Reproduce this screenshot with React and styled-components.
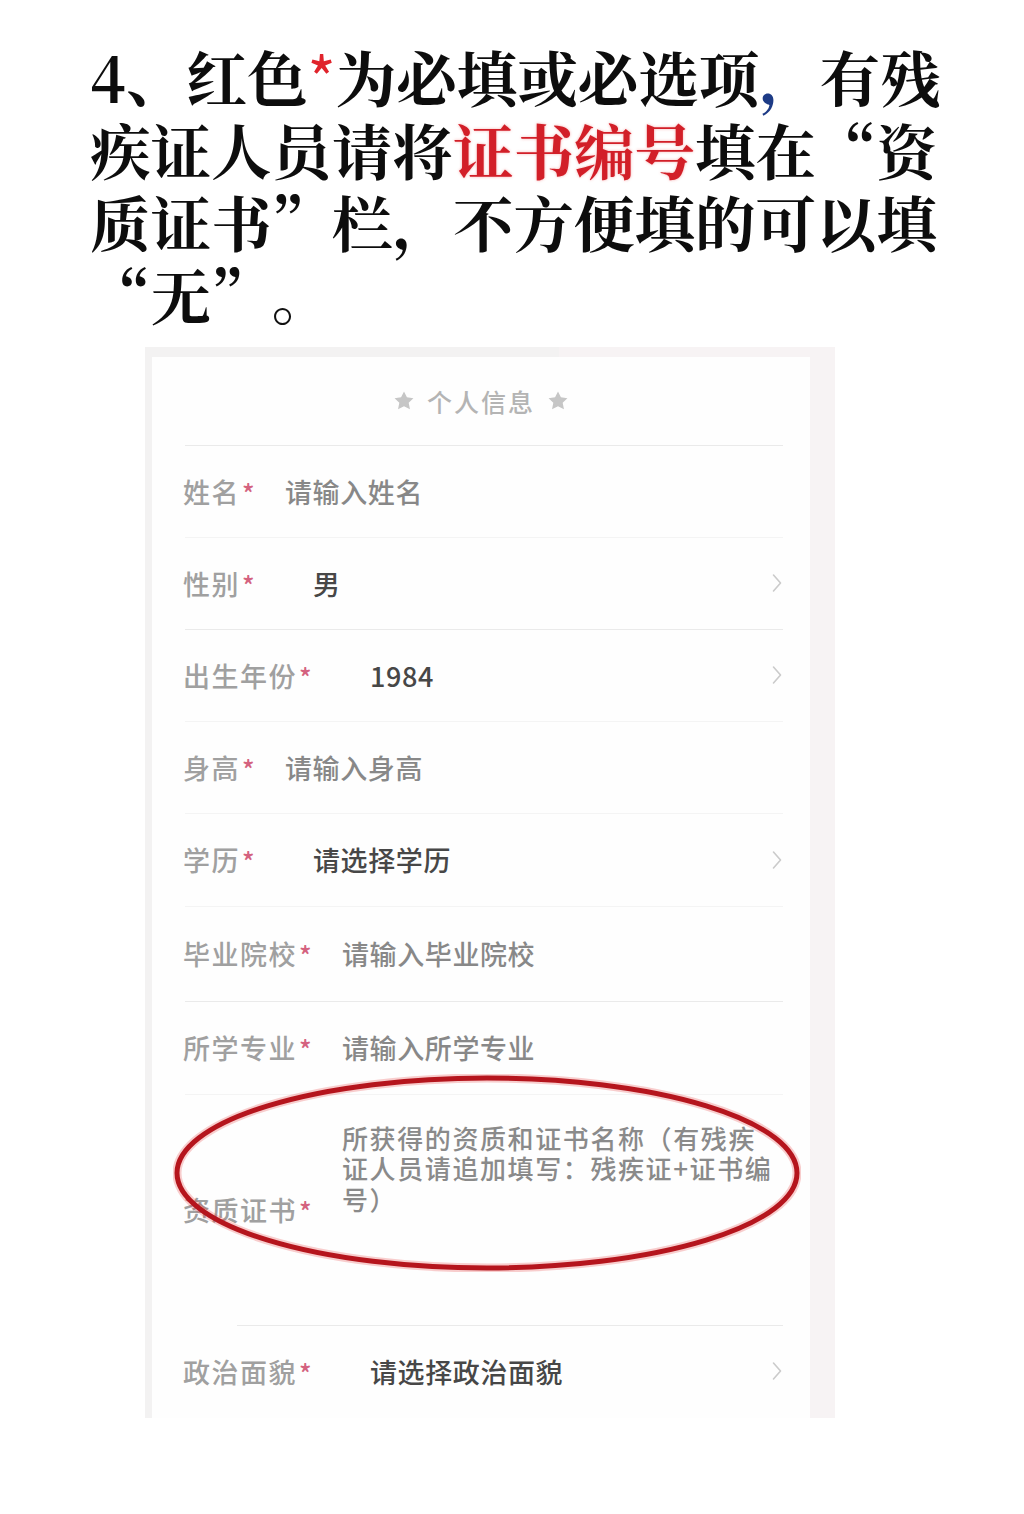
import React from 'react';
import styled, { createGlobalStyle } from 'styled-components';

const GlobalStyle = createGlobalStyle`
  html, body {
    margin: 0;
    padding: 0;
    background: #ffffff;
  }
  body {
    font-family: 'Noto Sans CJK SC', 'Noto Sans', sans-serif;
  }
`;

const rows = [
  { label: '姓名', value: '请输入姓名', kind: 'input', height: 91, faint: true },
  { label: '性别', value: '男', kind: 'picker', height: 91 },
  { label: '出生年份', value: '1984', kind: 'picker', height: 91, faint: true },
  { label: '身高', value: '请输入身高', kind: 'input', height: 91, faint: true },
  { label: '学历', value: '请选择学历', kind: 'picker', height: 92, faint: true },
  { label: '毕业院校', value: '请输入毕业院校', kind: 'input', height: 94 },
  { label: '所学专业', value: '请输入所学专业', kind: 'input', height: 92, faint: true },
];

const certLines = [
  '所获得的资质和证书名称（有残疾',
  '证人员请追加填写：残疾证+证书编',
  '号）',
];

export default function App() {
  return (
    <Page>
      <GlobalStyle />
      <Heading>
        <HeadLine>
          4、红色<Mark $tone="#e0242c" $sans>*</Mark>为必填或必选项
          <Mark $tone="#1d3b86">，</Mark>有残
        </HeadLine>
        <HeadLine>
          疾证人员请将<Mark $tone="#d21f28" $glow>证书编号</Mark>填在“资
        </HeadLine>
        <HeadLine>质证书”栏，不方便填的可以填</HeadLine>
        <HeadLine>
          “无”<Mark $tone="#111" $thin>。</Mark>
        </HeadLine>
      </Heading>

      <Frame>
        <Card>
          <Title>
            <Star />
            <TitleText>个人信息</TitleText>
            <Star />
          </Title>
          <Divider />

          {rows.map(row => (
            <React.Fragment key={row.label}>
              <Row $height={row.height}>
                <Label>
                  {row.label}
                  <Req>*</Req>
                </Label>
                <Value
                  $gap={row.kind === 'picker' ? 57 : 29}
                  $tone={row.kind === 'picker' ? '#474747' : '#888888'}
                >
                  {row.value}
                </Value>
                {row.kind === 'picker' && <Chevron />}
              </Row>
              <Divider $faint={row.faint} />
            </React.Fragment>
          ))}

          <Row $height={230}>
            <Label>
              资质证书<Req>*</Req>
            </Label>
            <TextArea>
              {certLines.map(line => (
                <TextLine key={line}>{line}</TextLine>
              ))}
            </TextArea>
            <Circle />
          </Row>
          <Divider $inset={85} />

          <Row $height={91}>
            <Label>
              政治面貌<Req>*</Req>
            </Label>
            <Value $gap={57} $tone="#474747">
              请选择政治面貌
            </Value>
            <Chevron />
          </Row>
        </Card>
      </Frame>
    </Page>
  );
}

function Star() {
  return (
    <StarIcon viewBox="0 0 24 24">
      <path d="M12 1.5l3.2 6.5 7.1.9-5.2 5 1.4 7.1L12 17.6l-6.5 3.4 1.4-7.1-5.2-5 7.1-.9z" />
    </StarIcon>
  );
}

function Chevron() {
  return (
    <ChevronIcon viewBox="0 0 12 22">
      <polyline points="2.5,3 9.5,11 2.5,19" />
    </ChevronIcon>
  );
}

function Circle() {
  return (
    <CircleMark viewBox="0 0 628 198">
      <ellipse cx="314" cy="99" rx="310" ry="95" className="glow" />
      <ellipse cx="314" cy="99" rx="310" ry="95" className="line" />
    </CircleMark>
  );
}

const Page = styled.div`
  width: 1024px;
  min-height: 1514px;
  background: #ffffff;
`;

const Heading = styled.h1`
  margin: 0;
  padding: 40px 0 0 90px;
  font-family: 'Noto Serif CJK SC', 'Noto Sans CJK SC', serif;
  font-size: 60.5px;
  font-weight: 700;
  line-height: 72.7px;
  color: #0d0d0d;
  text-spacing-trim: space-all;
`;

const HeadLine = styled.span`
  display: block;
  white-space: nowrap;
`;

const Mark = styled.span`
  color: ${props => props.$tone};
  font-family: ${props =>
    props.$sans ? "'Noto Sans CJK SC', sans-serif" : 'inherit'};
  font-weight: ${props => (props.$sans || props.$thin ? 400 : 'inherit')};
  text-shadow: ${props =>
    props.$glow ? '0 0 3px rgba(235, 70, 70, 0.45)' : 'none'};
`;

const Frame = styled.div`
  margin: 16px 0 0 145px;
  width: 690px;
  height: 1071px;
  box-sizing: border-box;
  padding: 10px 25px 0 7px;
  background: linear-gradient(90deg, #f3f2f2 0%, #f3f2f2 60%, #f7f3f4 60%);
`;

const Card = styled.div`
  display: flex;
  flex-direction: column;
  height: 100%;
  background: #fefefe;
`;

const Title = styled.div`
  display: flex;
  align-items: center;
  justify-content: center;
  gap: 12px;
  height: 88px;
`;

const TitleText = styled.span`
  font-size: 25px;
  font-weight: 500;
  letter-spacing: 2px;
  color: #b4b4b4;
`;

const StarIcon = styled.svg`
  width: 22px;
  height: 22px;
  fill: #c6c6c6;
`;

const Divider = styled.div`
  flex: none;
  height: 1px;
  margin: 0 27px 0 ${props => props.$inset ?? 33}px;
  background: ${props => (props.$faint ? '#f4f4f4' : '#eaeaea')};
`;

const Row = styled.div`
  position: relative;
  flex: none;
  display: flex;
  align-items: center;
  height: ${props => props.$height}px;
  margin: 0 27px 0 31px;
`;

const Label = styled.span`
  display: inline-flex;
  align-items: center;
  font-size: 27px;
  font-weight: 500;
  letter-spacing: 1.5px;
  color: #a0a0a0;
  white-space: nowrap;
`;

const Req = styled.span`
  display: inline-block;
  width: 14px;
  margin-left: 2px;
  font-size: 26px;
  line-height: 1;
  padding-top: 3px;
  color: #d4627f;
`;

const Value = styled.span`
  margin-left: ${props => props.$gap}px;
  font-size: 27px;
  font-weight: 500;
  letter-spacing: 0.6px;
  color: ${props => props.$tone};
  white-space: nowrap;
`;

const ChevronIcon = styled.svg`
  margin-left: auto;
  width: 12px;
  height: 22px;
  fill: none;
  stroke: #cbcbcb;
  stroke-width: 1.6;
  stroke-linecap: round;
  stroke-linejoin: round;
`;

const TextArea = styled.div`
  align-self: flex-start;
  margin-left: 29px;
  padding-top: 28px;
  font-size: 26px;
  font-weight: 500;
  line-height: 30.5px;
  letter-spacing: 1.6px;
  color: #8a8a8a;
`;

const TextLine = styled.span`
  display: block;
  white-space: nowrap;
`;

const CircleMark = styled.svg`
  position: absolute;
  left: -10px;
  top: -21px;
  width: 628px;
  height: 198px;
  fill: none;
  pointer-events: none;

  .glow {
    stroke: rgba(230, 60, 60, 0.25);
    stroke-width: 9;
  }

  .line {
    stroke: #b5151d;
    stroke-width: 5;
  }
`;
